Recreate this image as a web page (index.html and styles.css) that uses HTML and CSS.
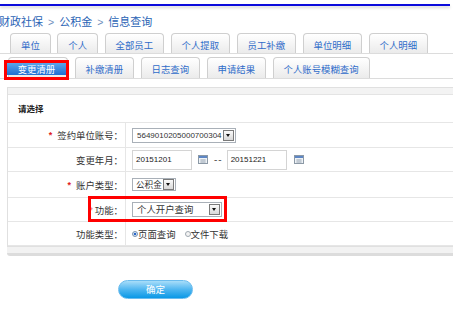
FILE: index.html
```html
<!DOCTYPE html>
<html lang="zh-CN">
<head>
  <meta charset="UTF-8">
  <meta name="viewport" content="width=device-width, initial-scale=1.0">
  <title>信息查询</title>
  <link rel="stylesheet" href="styles.css">
</head>
<body>
  <div class="topbar"><div class="topline"></div></div>

  <div class="crumbs">
    <span>财政社保</span><span class="sep">&gt;</span><span>公积金</span><span class="sep">&gt;</span><span>信息查询</span>
  </div>

  <div class="tabs tabs-main">
    <a class="tab">单位</a>
    <a class="tab">个人</a>
    <a class="tab">全部员工</a>
    <a class="tab">个人提取</a>
    <a class="tab">员工补缴</a>
    <a class="tab">单位明细</a>
    <a class="tab">个人明细</a>
  </div>

  <div class="tabs tabs-sub">
    <a class="tab active"><span class="tab-fill">变更清册</span></a>
    <a class="tab">补缴清册</a>
    <a class="tab">日志查询</a>
    <a class="tab">申请结果</a>
    <a class="tab">个人账号模糊查询</a>
  </div>

  <div class="panel">
    <div class="panel-head"></div>
    <div class="panel-title">请选择</div>

    <div class="form-row row-24">
      <div class="form-label"><span class="req">*</span>签约单位账号：</div>
      <div class="form-field">
        <span class="select select-acct">
          <span class="select-text num">5649010205000700304</span><span class="select-btn"></span>
        </span>
      </div>
    </div>

    <div class="form-row">
      <div class="form-label">变更年月：</div>
      <div class="form-field">
        <span class="date-input num">20151201</span>
        <svg class="cal" width="10" height="9" viewBox="0 0 10 9"><rect x="0.5" y="0.5" width="9" height="8" fill="#eef2f6" stroke="#8c99a6"/><rect x="1" y="1" width="8" height="2" fill="#5d86c4"/><path d="M2 5h6M2 7h6M4 4v4M6 4v4" stroke="#a8b4c0" stroke-width="0.8"/></svg>
        <span class="dash">--</span>
        <span class="date-input num">20151221</span>
        <svg class="cal cal-end" width="10" height="9" viewBox="0 0 10 9"><rect x="0.5" y="0.5" width="9" height="8" fill="#eef2f6" stroke="#8c99a6"/><rect x="1" y="1" width="8" height="2" fill="#5d86c4"/><path d="M2 5h6M2 7h6M4 4v4M6 4v4" stroke="#a8b4c0" stroke-width="0.8"/></svg>
      </div>
    </div>

    <div class="form-row row-25">
      <div class="form-label"><span class="req">*</span>账户类型：</div>
      <div class="form-field">
        <span class="select select-type">
          <span class="select-text">公积金</span><span class="select-btn"></span>
        </span>
      </div>
    </div>

    <div class="form-row marked">
      <div class="form-label"><span class="req req-faint">*</span>功能：</div>
      <div class="form-field">
        <span class="select select-func">
          <span class="select-text">个人开户查询</span><span class="select-btn"></span>
        </span>
      </div>
      <div class="mark"></div>
    </div>

    <div class="form-row">
      <div class="form-label">功能类型：</div>
      <div class="form-field">
        <span class="radio checked"></span><span class="radio-text">页面查询</span>
        <span class="radio"></span><span class="radio-text">文件下载</span>
      </div>
    </div>
  </div>
  <div class="panel-foot"></div>

  <div class="actions">
    <button class="btn-ok">确定</button>
  </div>
</body>
</html>
```

FILE: styles.css
```css
body {
  margin: 0;
  font-family: "Noto Sans CJK SC", sans-serif;
  font-size: 9.4px;
  color: #333;
  background: #fff;
  overflow: hidden;
}

.num {
  font-family: "Liberation Sans", sans-serif;
  font-size: 8px;
}

/* top line */
.topbar {
  height: 10px;
}

.topline {
  width: 450px;
  height: 2px;
  margin-top: 4px;
  background: #0b0bdc;
  box-shadow: 0 2px 3px rgba(0, 0, 0, 0.18);
}

/* breadcrumb */
.crumbs {
  height: 19px;
  margin-left: -1px;
  line-height: 15px;
  font-size: 11px;
  color: #2a63b5;
  white-space: nowrap;
}

.crumbs .sep {
  margin: 0 5px;
  font-family: "Liberation Sans", sans-serif;
  font-size: 10.5px;
  color: #6f8fbd;
}

/* tabs */
.tabs {
  display: flex;
  gap: 6.5px;
  border-bottom: 1px solid #dcdcdc;
}

.tabs-main {
  padding-left: 10px;
}

.tabs-sub {
  padding-left: 8px;
  margin-top: 3px;
}

.tab {
  box-sizing: border-box;
  padding: 2px 10px 0;
  border: 1px solid #cfcfcf;
  border-bottom: none;
  border-radius: 4px 4px 0 0;
  background: linear-gradient(#ffffff, #ebebeb);
  color: #2f6bc9;
  line-height: 18px;
  white-space: nowrap;
}

.tabs-main .tab {
  height: 20px;
}

.tabs-sub .tab {
  height: 21px;
}

.tab.active {
  position: relative;
  width: 60px;
  padding: 0;
}

.tab-fill {
  display: block;
  margin: 5px 1px 0 -2px;
  height: 12px;
  line-height: 12px;
  background: linear-gradient(#5aa6ea, #1f6ed2);
  color: #fff;
  text-align: center;
}

.tab.active::after {
  content: "";
  position: absolute;
  left: -5px;
  top: 2px;
  width: 65px;
  height: 20px;
  border: 3px solid #f00;
  box-sizing: border-box;
}

/* panel */
.panel {
  margin: 8px 0 0 7px;
  border: 1px solid #e0e0e0;
  border-right: none;
}

.panel-head {
  height: 6px;
  background: #f3f3f3;
  border-bottom: 1px solid #e4e4e4;
}

.panel-title {
  height: 27px;
  line-height: 27px;
  padding-left: 10px;
  font-size: 8.5px;
  font-weight: bold;
  color: #222;
  border-bottom: 1px solid #e6e6e6;
}

.form-row {
  display: grid;
  grid-template-columns: 118px 1fr;
  height: 23px;
  border-bottom: 1px solid #e6e6e6;
}

.form-row.row-24 {
  height: 24px;
}

.form-row.row-25 {
  height: 25px;
}

.form-row.marked {
  position: relative;
}

.form-label {
  box-sizing: border-box;
  display: flex;
  align-items: center;
  justify-content: flex-end;
  padding-right: 2px;
  border-right: 1px solid #e6e6e6;
  white-space: nowrap;
}

.req {
  margin-right: 5px;
  font-family: "Liberation Sans", sans-serif;
  font-weight: bold;
  font-size: 9px;
  color: #e02020;
}

.req-faint {
  color: #f08a8a;
  margin-right: 2px;
}

.form-field {
  display: flex;
  align-items: center;
  padding-left: 6px;
  white-space: nowrap;
}

.mark {
  position: absolute;
  left: 80px;
  top: -2px;
  width: 139px;
  height: 26px;
  border: 3px solid #f00;
  box-sizing: border-box;
}

/* select boxes */
.select {
  box-sizing: border-box;
  display: inline-flex;
  align-items: center;
  height: 15px;
  border: 1px solid #a9b0b8;
  background: #fff;
}

.select-text {
  flex: 1;
  padding-left: 4px;
  overflow: hidden;
  white-space: nowrap;
  line-height: 13px;
}

.select-btn {
  position: relative;
  box-sizing: border-box;
  flex: none;
  width: 11px;
  height: 11px;
  margin-right: 1px;
  border: 1px solid #7a7a7a;
  background: linear-gradient(#fafafa, #d8d8d8);
}

.select-btn::after {
  content: "";
  position: absolute;
  left: 2px;
  top: 3px;
  border-left: 2.5px solid transparent;
  border-right: 2.5px solid transparent;
  border-top: 3px solid #111;
}

.select-acct {
  width: 104px;
}

.select-type {
  width: 44px;
  height: 13px;
}

.select-type .select-text {
  padding-left: 3px;
  font-size: 8.6px;
  line-height: 11px;
}

.select-func {
  width: 90px;
}

/* date range */
.date-input {
  box-sizing: border-box;
  width: 60px;
  height: 20px;
  padding-left: 3px;
  border: 1px solid #d4d4d4;
  line-height: 18px;
  color: #222;
}

.cal {
  margin-left: 6px;
}

.cal-end {
  margin-left: 7px;
}

.dash {
  margin: 0 4px 0 6px;
  font-family: "Liberation Sans", sans-serif;
  font-size: 10px;
  letter-spacing: 1px;
  color: #555;
}

/* radios */
.radio {
  box-sizing: border-box;
  width: 6px;
  height: 6px;
  border-radius: 50%;
  border: 1px solid #a0a8b0;
  background: #f4f4f4;
}

.radio.checked {
  background: radial-gradient(#2a66c8 45%, #cfe0f4 55%);
  border-color: #7d93ad;
}

.radio-text {
  margin-right: 9px;
}

.panel-foot {
  height: 6px;
  margin-left: 7px;
  background: #f2f2f2;
  border-bottom: 3px solid #dcdcdc;
  border-radius: 0 0 0 3px;
}

/* submit */
.actions {
  padding: 24px 0 0 118px;
}

.btn-ok {
  width: 75px;
  height: 19px;
  padding: 0;
  border: 1px solid #6bbcee;
  border-radius: 10px;
  background: linear-gradient(#a8ddf9, #4fb6f0 50%, #0a98e6);
  color: #fff;
  font-family: "Noto Sans CJK SC", sans-serif;
  font-size: 9.5px;
  line-height: 17px;
  cursor: pointer;
}
```
